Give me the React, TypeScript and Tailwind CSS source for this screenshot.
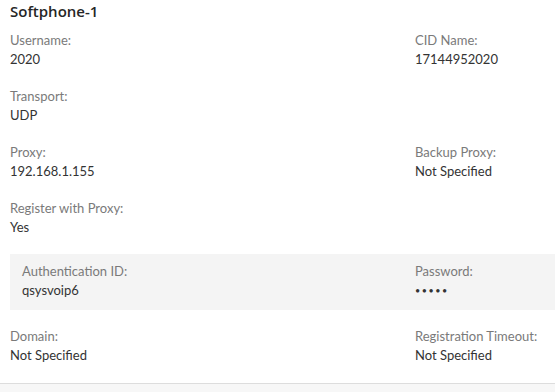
import React from "react";

interface FieldProps {
  label: string;
  value: string;
  dots?: boolean;
}

function Field({ label, value, dots }: Readonly<FieldProps>) {
  return (
    <div className="flex flex-col">
      <span className="text-[13px] leading-[19px] text-[#7a7a7a]">{label}</span>
      {dots ? (
        <span className="text-[9px] leading-[19px] tracking-[1.5px] text-[#333333]">{value}</span>
      ) : (
        <span className="text-[13px] leading-[19px] text-[#333333]">{value}</span>
      )}
    </div>
  );
}

interface RowProps {
  left?: FieldProps;
  right?: FieldProps;
  shaded?: boolean;
}

function Row({ left, right, shaded }: Readonly<RowProps>) {
  return (
    <div
      className={
        shaded
          ? "grid grid-cols-[393px_1fr] h-[56px] pt-2 ml-[10px] pl-3 bg-[#f4f4f4]"
          : "grid grid-cols-[405px_1fr] h-[56px] pt-2 pl-[10px]"
      }
    >
      <div>{left && <Field {...left} />}</div>
      <div>{right && <Field {...right} />}</div>
    </div>
  );
}

export default function App() {
  return (
    <div
      className="w-[555px] h-[392px] bg-white flex flex-col"
      style={{ fontFamily: "Lato, 'Noto Sans', sans-serif" }}
    >
      <div
        className="h-[23px] pl-[10px] pt-[1px] text-[15px] leading-[20px] font-semibold text-[#262626]"
        style={{ fontFamily: "'Open Sans', Lato, sans-serif" }}
      >
        Softphone-1
      </div>
      <Row left={{ label: "Username:", value: "2020" }} right={{ label: "CID Name:", value: "17144952020" }} />
      <Row left={{ label: "Transport:", value: "UDP" }} />
      <Row
        left={{ label: "Proxy:", value: "192.168.1.155" }}
        right={{ label: "Backup Proxy:", value: "Not Specified" }}
      />
      <Row left={{ label: "Register with Proxy:", value: "Yes" }} />
      <div className="mt-[7px]">
        <Row
          shaded
          left={{ label: "Authentication ID:", value: "qsysvoip6" }}
          right={{ label: "Password:", value: "•••••", dots: true }}
        />
      </div>
      <div className="mt-[9px]">
        <Row
          left={{ label: "Domain:", value: "Not Specified" }}
          right={{ label: "Registration Timeout:", value: "Not Specified" }}
        />
      </div>
      <div className="mt-[8px] flex-1 border-t border-[#dddddd] bg-[#f7f7f7]" />
    </div>
  );
}
